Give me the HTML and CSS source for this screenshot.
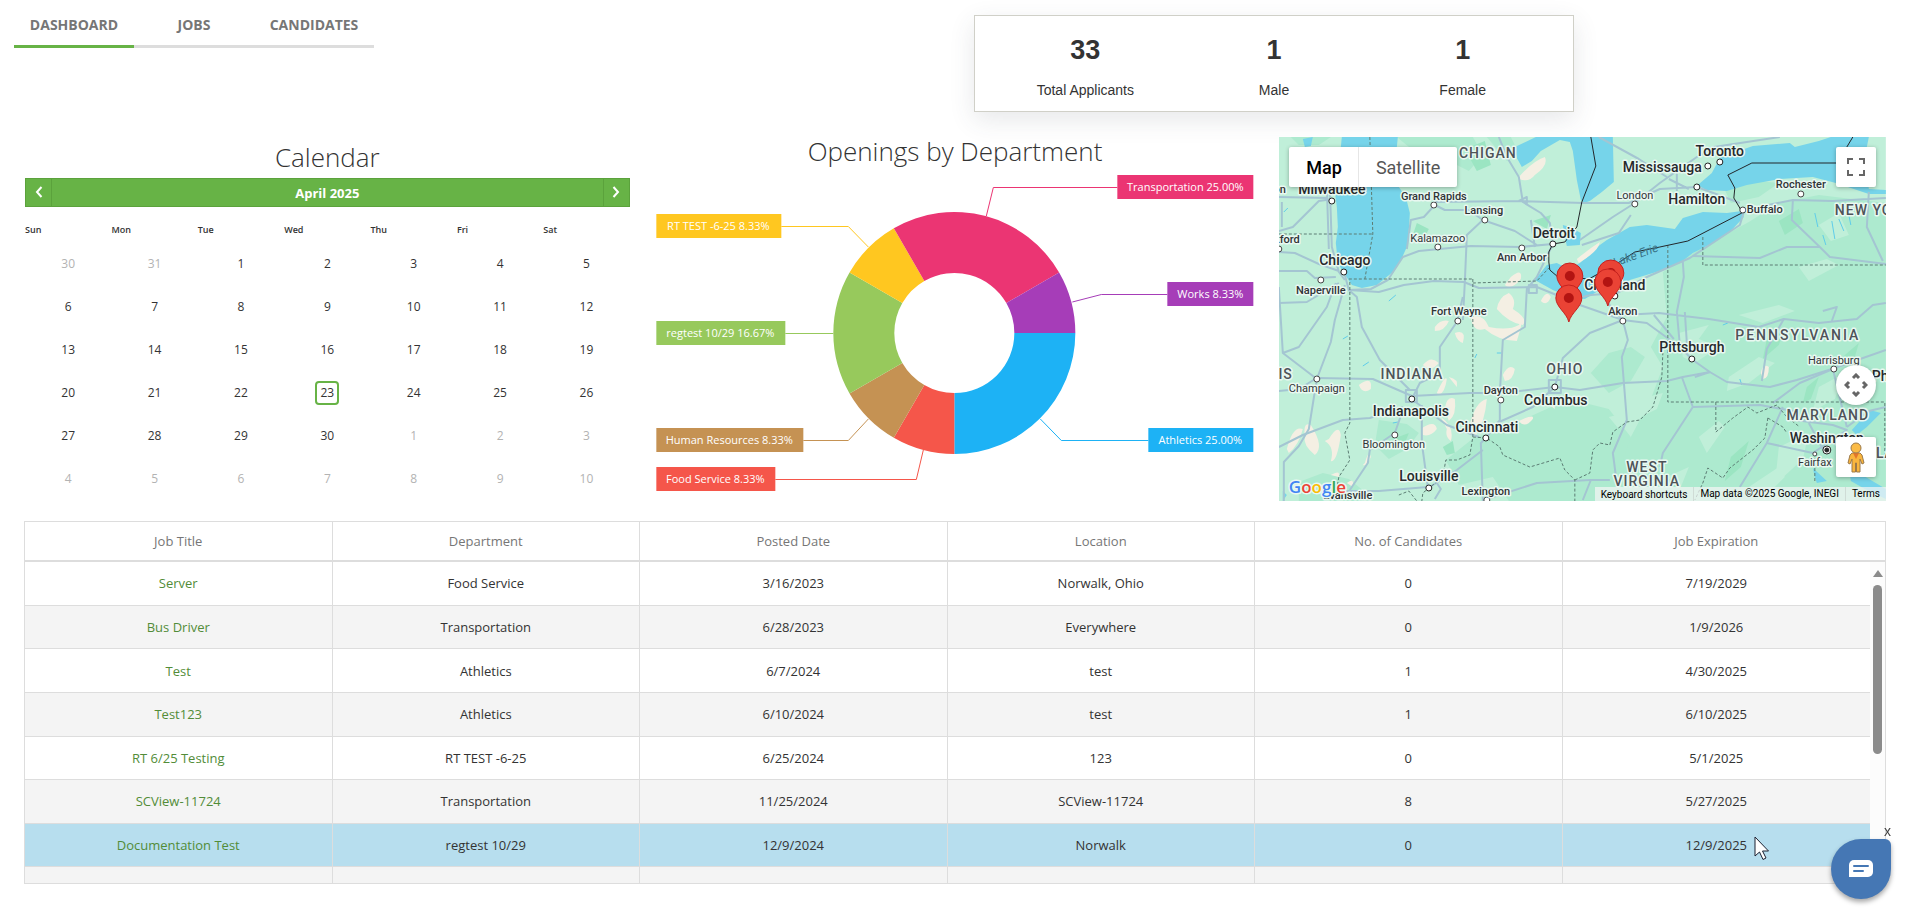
FILE: index.html
```html
<!DOCTYPE html>
<html lang="en">
<head>
  <meta charset="UTF-8" />
  <meta name="viewport" content="width=device-width, initial-scale=1.0" />
  <title>Dashboard</title>
  <link rel="stylesheet" href="styles.css">
</head>
<body>
  <header class="top">
    <nav class="tabs">
      <a href="#dashboard" class="tab active">DASHBOARD</a>
      <a href="#jobs" class="tab">JOBS</a>
      <a href="#candidates" class="tab">CANDIDATES</a>
    </nav>
    <div class="stats">
      <div class="stat"><strong>33</strong><span>Total Applicants</span></div>
      <div class="stat"><strong>1</strong><span>Male</span></div>
      <div class="stat"><strong>1</strong><span>Female</span></div>
    </div>
  </header>

  <main>
    <div class="panels">
      <!-- Calendar -->
      <section class="calendar">
        <h2>Calendar</h2>
        <div class="cal-nav">
          <button type="button" aria-label="Previous month">
            <svg width="8" height="12" viewBox="0 0 8 12"><path d="M6.500 1L2 6l4.500 5" /></svg>
          </button>
          <button type="button" class="cal-caption">April 2025</button>
          <button type="button" aria-label="Next month">
            <svg width="8" height="12" viewBox="0 0 8 12"><path d="M1.500 1L6 6l-4.500 5" /></svg>
          </button>
        </div>
        <table class="cal-days">
          <thead>
            <tr><th>Sun</th><th>Mon</th><th>Tue</th><th>Wed</th><th>Thu</th><th>Fri</th><th>Sat</th></tr>
          </thead>
          <tbody>
            <tr><td class="other">30</td><td class="other">31</td><td>1</td><td>2</td><td>3</td><td>4</td><td>5</td></tr>
            <tr><td>6</td><td>7</td><td>8</td><td>9</td><td>10</td><td>11</td><td>12</td></tr>
            <tr><td>13</td><td>14</td><td>15</td><td>16</td><td>17</td><td>18</td><td>19</td></tr>
            <tr><td>20</td><td>21</td><td>22</td><td><span class="today">23</span></td><td>24</td><td>25</td><td>26</td></tr>
            <tr><td>27</td><td>28</td><td>29</td><td>30</td><td class="other">1</td><td class="other">2</td><td class="other">3</td></tr>
            <tr><td class="other">4</td><td class="other">5</td><td class="other">6</td><td class="other">7</td><td class="other">8</td><td class="other">9</td><td class="other">10</td></tr>
          </tbody>
        </table>
      </section>

      <!-- Openings donut -->
      <section class="chart">
        <h2>Openings by Department</h2>
        <svg class="donut" viewBox="0 0 606 334">
          <!-- slices, centre 302,166, radii 121 and 60 -->
          <path fill="#1db2f5" d="M423 166A121 121 0 0 1 302 287V226A60 60 0 0 0 362 166Z" />
          <path fill="#f5564a" d="M302 287A121 121 0 0 1 241.500 270.800L272 218A60 60 0 0 0 302 226Z" />
          <path fill="#c59253" d="M241.500 270.800A121 121 0 0 1 197.200 226.500L250 196A60 60 0 0 0 272 218Z" />
          <path fill="#97c95c" d="M197.200 226.500A121 121 0 0 1 197.200 105.500L250 136A60 60 0 0 0 250 196Z" />
          <path fill="#ffc720" d="M197.200 105.500A121 121 0 0 1 241.500 61.200L272 114A60 60 0 0 0 250 136Z" />
          <path fill="#eb3573" d="M241.500 61.200A121 121 0 0 1 406.800 105.500L354 136A60 60 0 0 0 272 114Z" />
          <path fill="#a63db8" d="M406.800 105.500A121 121 0 0 1 423 166H362A60 60 0 0 0 354 136Z" />
          <g class="leads">
            <path stroke="#eb3573" d="M334 49L341 20.500H465" />
            <path stroke="#a63db8" d="M420 135L449 127.500H515" />
            <path stroke="#1db2f5" d="M388 252L409 273.500H496" />
            <path stroke="#ffc720" d="M216 80L196 59.500H129" />
            <path stroke="#97c95c" d="M181 166.500H133" />
            <path stroke="#c59253" d="M216 252L196 273.500H151" />
            <path stroke="#f5564a" d="M271 283L264 312.500H123" />
          </g>
          <g class="labels">
            <rect x="465" y="8" width="136" height="24" fill="#eb3573" />
            <rect x="515" y="115" width="86" height="24" fill="#a63db8" />
            <rect x="496" y="261" width="105" height="24" fill="#1db2f5" />
            <rect x="4" y="47" width="125" height="24" fill="#ffc720" />
            <rect x="4" y="154" width="129" height="24" fill="#97c95c" />
            <rect x="4" y="261" width="147" height="24" fill="#c59253" />
            <rect x="4" y="300" width="119" height="24" fill="#f5564a" />
            <text x="533" y="24">Transportation 25.00%</text>
            <text x="558" y="131">Works 8.33%</text>
            <text x="548" y="277">Athletics 25.00%</text>
            <text x="66" y="63">RT TEST -6-25 8.33%</text>
            <text x="68" y="170">regtest 10/29 16.67%</text>
            <text x="77" y="277">Human Resources 8.33%</text>
            <text x="63" y="316">Food Service 8.33%</text>
          </g>
        </svg>
      </section>

      <!-- Map -->
      <section class="map">
        <svg class="map-canvas" viewBox="0 0 607 364" preserveAspectRatio="xMidYMid slice">
          <rect width="607" height="364" fill="#c0efd9" />
          <!-- hills and woods -->
          <g fill="#adeacf">
            <path d="M384 135L424 110 470 85 500 66 540 58 607 66V364H312L330 330 352 300 372 262 384 230 372 210 388 180Z" />
            <path d="M167 323L196 300 226 294 250 280 290 262 330 272 352 300 330 364H230L214 340 180 348Z" />
            <path d="M100 283L128 287 140 296 128 312 110 322 96 308ZM20 345L44 336 70 342 90 358 84 364H20Z" />
            <path d="M118 0H194L204 18 190 34 170 24 140 18ZM12 0H52L40 8H20ZM208 0H232L240 16 228 24Z" />
            <path d="M312 236L330 216 352 210 366 220 352 244 330 256ZM440 40L500 46 480 60 452 66Z" />
          </g>
          <g fill="#c0efd9">
            <path d="M400 196L430 188 420 202 440 210 416 226 404 220ZM450 240L480 220 496 226 470 246 448 254Z" />
            <path d="M520 130L548 122 560 128 530 144ZM420 300L440 284 446 290 428 316ZM360 262L384 256 378 272 362 280Z" />
            <path d="M500 310L530 296 524 322 496 348ZM460 178L500 168 516 174 484 186ZM330 280L346 276 340 292ZM540 250L566 236 556 262 534 274Z" />
            <path d="M470 350L500 330 506 340 486 360ZM388 340L410 330 402 350ZM540 88L560 76 570 98 552 104Z" />
          </g>
          <g fill="#9be5c2">
            <path d="M138 86L150 92 144 104 134 98ZM186 12L206 4 212 28 198 34ZM500 84L520 72 524 86 506 98ZM488 202L506 192 500 208 484 222ZM566 218L580 206 576 220 560 226Z" />
            <path d="M164 310L174 304 176 316 168 318ZM114 302L130 296 126 306ZM528 250L540 240 532 262 524 266ZM254 84L272 78 268 92ZM452 320L470 304 462 330 446 344Z" />
          </g>
          <g fill="#f4efe3">
            <path d="M240 40Q254 24 266 20Q270 28 256 38Q250 46 240 42ZM218 172Q220 160 230 156Q238 162 234 172Q250 182 244 188Q230 186 218 172Z" />
            <path d="M232 140Q244 130 242 142Q232 154 226 148ZM156 190Q162 182 170 184Q166 194 156 194ZM176 196Q188 192 184 206Q178 204 176 196ZM192 180Q204 176 210 190Q230 194 240 188Q246 178 238 204Q220 204 206 192Q194 196 192 180Z" />
            <path d="M80 248Q94 238 92 252Q84 258 80 248ZM144 228Q152 218 160 226Q152 236 144 228ZM158 256Q166 238 168 242Q166 256 160 258ZM170 240Q180 242 178 250ZM166 272Q168 258 176 262Q178 278 170 284Z" />
            <path d="M224 238Q230 226 236 232Q234 244 226 244ZM190 292Q196 264 208 262Q206 286 196 300ZM142 292Q156 282 158 292Q152 300 144 298ZM162 280Q176 290 172 304Q166 300 168 292ZM240 284Q256 276 254 282Q246 292 240 284Z" />
            <path d="M8 312Q14 288 24 292Q20 308 10 316ZM26 300Q24 284 32 288Q46 310 36 318Q24 308 26 300ZM50 302Q60 286 62 298Q58 326 52 324Q56 310 46 304ZM86 326Q90 312 92 320Q88 330 84 328ZM52 338Q62 332 60 340ZM68 346Q76 340 74 350Z" />
            <path d="M482 236Q484 226 490 230Q490 242 484 242ZM262 164Q268 152 272 160Q268 170 262 164ZM268 266Q276 262 276 272Z" />
          </g>
          <!-- lakes and bays -->
          <g fill="#76d4ea">
            <path d="M63 0L60 30 56 55 58 70 59 90 57 106 59 126 65 136 73 148 83 151 98 148 114 135 123 121 128 110 130 93 131 76 127 60 120 50 116 30 119 0Z" />
            <path d="M257 0L236 10 238 21 243 30 253 24 262 14 281 3 291 5 294 14 298 43 302 63 305 66 311 64 323 55 335 45 334 0Z" />
            <path d="M284 88L291 90 302 96 301 108 288 109 286 100Z" />
            <path d="M256 143L268 128 278 126 290 132 301 126 311 118 321 108 328 103 351 90 368 88 396 92 404 81 424 75 448 76 463 74 465 80 451 95 434 106 414 116 401 126 384 133 361 140 351 143 338 150 321 153 306 162 291 160 274 153Z" />
            <path d="M419 48L433 36 441 21 454 16 474 9 511 6 516 10 540 4 552 0H590L586 20 590 52 607 53V57H590L557 46 534 40 501 42 468 48 448 54 427 53Z" />
            <path d="M591 273L602 276 588 290 578 298 573 293ZM534 331L548 344 538 346 536 340ZM570 330L607 352V362L586 352 572 344ZM24 2L34 0 32 9 26 10ZM4 354L8 358 4 364Z" />
          </g>
          <path fill="#f4efe3" d="M298 122Q310 112 321 105Q320 114 300 126Z" />
          <g class="streams">
            <path d="M5 75l4-4M62 28l5-2M110 164l7-6M84 229l6-4M196 221l2-4M218 216h5M64 202l5-3M114 286l5-1M536 76l3 14M553 84l3 18M560 82l5 12M570 78l2 10M544 98l3 10M461 242l2 6M444 188l5-2" />
          </g>
          <!-- highways -->
          <g class="roads">
            <path d="M0 60L48 61M51 50L53 110 60 135 66 143M48 50L50 112M0 94L14 90 40 64 54 62M3 65V90M0 115L16 116 40 127 60 134M0 134L28 134 36 141 57 140M0 166L28 165 60 146" />
            <path d="M66 148L56 183 52 205 38 242 30 292 20 309 5 325V364M0 150L4 216 38 242M0 254L20 252 38 241M4 216L20 210 48 170 57 146" />
            <path d="M66 138L70 153 92 152 109 143 124 120 140 114 192 109 241 110 274 107M70 153L100 155 125 148 155 144 185 145 200 151 258 150 290 163 312 158 338 156 368 140 411 121 461 88 465 75" />
            <path d="M128 112L132 83 145 80 156 68 166 73 190 73 204 83 236 94 258 108M204 83L188 98 186 145 184 183M220 0L228 20 240 40 244 65 262 76 271 86 274 107M156 65L241 64 305 66M240 64l8-4v8M252 83L256 110" />
            <path d="M274 107L258 140 248 152 246 190 224 203 221 256 221 283 208 300 202 306 204 364M250 148h8v8h-8zM38 241L94 242 133 259 191 256 224 256 276 250 301 253 344 246 388 244 404 240 431 235 448 245 491 250 518 243 553 232 607 213" />
            <path d="M131 253L101 223 83 190 78 160 70 153M127 253h11v12h-11zM133 262L141 246 161 236 161 210 178 185 184 160M143 268L143 306 149 350M134 263L168 288 200 300M124 270L91 281 64 283 24 298 0 310M124 273L116 296 91 313 89 326 71 353" />
            <path d="M151 350L178 333 204 313M149 350L100 354 60 354M158 346l4 6-6 10M211 361L258 346 311 343 331 343M270 243h12v13h-12zM276 250L284 221 311 196 344 183 328 165M276 250L254 270 218 286" />
            <path d="M344 183L349 203 343 220 348 283 334 316 338 346M344 183L368 186 401 210 414 223 431 235M344 178L380 176 430 182 480 190 505 182 540 186 578 182 594 168 607 166M401 208L398 175 405 140 404 125M375 178L395 202M408 206L406 175" />
            <path d="M465 73L514 63 554 64 607 61M514 64L513 83 541 110 551 120 607 127M414 119L481 121 508 110 541 110M590 55L588 90 604 124M505 182L488 212 483 244M553 184L558 170 544 174" />
            <path d="M301 103L334 80 356 66 381 46 418 20 435 10 501 0M301 66L350 66 381 52 418 50 440 58 461 66M303 108L340 96 352 78M390 42l20 10M398 34v20M320 0L360 22 388 40" />
            <path d="M403 240L414 270 401 290 384 316 381 330M414 270L481 268 520 275M504 270L488 306 461 350M488 306L534 316M516 283L554 288 568 293 534 316M494 266L521 246 554 232 568 290M530 286l14 26M568 290L590 274 607 270M301 168L344 183M431 235L416 240M312 343l-8 20" />
          </g>
          <!-- state lines -->
          <g class="state-lines">
            <path d="M71 145V286L66 296 71 323 60 340 56 363M70 142H194M194 146L258 144 270 131M194 142V300L191 318 178 323 167 323 164 340 144 356 143 364M0 97H94M91 0L94 97 86 142" />
            <path d="M194 300L208 301 221 310 224 318 251 330 281 321 286 333 296 343V364M296 343L311 336 314 313 321 306 331 308 334 295 348 285 361 283 374 270 383 240 384 216M389 108V265H607M424 100V128H607" />
            <path d="M437 265V295L454 281 469 270 478 276 498 268 508 280 521 290M489 281L486 301 474 313 451 331 444 341 429 331 424 346 416 363M489 281L504 290 508 296M606 266V320M536 316V344M120 358l10-4 8 10" />
          </g>
          <path class="border" d="M574 0L568 10 558 26H473L449 38 456 51 455 61 461 71 463 76 409 104 381 110 356 115 339 126 310 142 278 139 271 133 270 125V115L274 107 286 105 298 90 303 65 317 29 312 0" />
          <g class="dots">
            <circle cx="53" cy="64" r="3" /><circle cx="65" cy="135" r="3" /><circle cx="274" cy="107" r="3" />
            <circle cx="441" cy="25" r="3" /><circle cx="429" cy="29" r="3" /><circle cx="418" cy="50" r="3" />
            <circle cx="336" cy="159" r="3" /><circle cx="413" cy="222" r="3" /><circle cx="276" cy="250" r="3" />
            <circle cx="207" cy="301" r="3" /><circle cx="133" cy="262" r="3" /><circle cx="150" cy="351" r="3" />
            <circle cx="548" cy="313" r="4" /><circle class="capital" cx="548" cy="313" r="2" />
          </g>
          <g class="dots small">
            <circle cx="42" cy="143" r="3" /><circle cx="155" cy="68" r="3" /><circle cx="206" cy="83" r="3" />
            <circle cx="159" cy="110" r="3" /><circle cx="243" cy="111" r="3" /><circle cx="179" cy="184" r="3" />
            <circle cx="0" cy="112" r="3" /><circle cx="356" cy="67" r="3" /><circle cx="522" cy="57" r="3" />
            <circle cx="464" cy="73" r="3" /><circle cx="344" cy="184" r="3" /><circle cx="555" cy="232" r="3" />
            <circle cx="536" cy="317" r="2" /><circle cx="222" cy="263" r="3" /><circle cx="116" cy="298" r="3" />
            <circle cx="208" cy="363" r="3" /><circle cx="38" cy="242" r="3" />
          </g>
          <g class="state">
            <text x="209" y="21">CHIGAN</text>
            <text x="133" y="242">INDIANA</text>
            <text x="286" y="237">OHIO</text>
            <text class="wide" x="519" y="203">PENNSYLVANIA</text>
            <text x="549" y="283">MARYLAND</text>
            <text x="368" y="335">WEST</text>
            <text x="368" y="349">VIRGINIA</text>
            <text class="from" x="556" y="78">NEW YORK</text>
            <text class="from" x="578" y="321">DELAWARE</text>
            <text class="to" x="14" y="242">ILLINOIS</text>
          </g>
          <g class="city">
            <text x="53" y="57">Milwaukee</text>
            <text x="66" y="128">Chicago</text>
            <text x="275" y="101">Detroit</text>
            <text x="441" y="19">Toronto</text>
            <text class="to" x="423" y="35">Mississauga</text>
            <text x="418" y="67">Hamilton</text>
            <text x="336" y="153">Cleveland</text>
            <text x="413" y="215">Pittsburgh</text>
            <text x="277" y="268">Columbus</text>
            <text x="208" y="295">Cincinnati</text>
            <text x="132" y="279">Indianapolis</text>
            <text x="150" y="344">Louisville</text>
            <text x="548" y="306">Washington</text>
            <text class="from" x="593" y="244">Philadelphia</text>
          </g>
          <g class="town">
            <text class="to" x="7" y="56">Madison</text>
            <text class="to" x="21" y="106">Rockford</text>
            <text x="42" y="157">Naperville</text>
            <text x="155" y="63">Grand Rapids</text>
            <text x="205" y="77">Lansing</text>
            <text class="thin" x="159" y="105">Kalamazoo</text>
            <text x="243" y="124">Ann Arbor</text>
            <text x="180" y="178">Fort Wayne</text>
            <text class="thin" x="356" y="62">London</text>
            <text x="522" y="51">Rochester</text>
            <text class="from" x="468" y="76">Buffalo</text>
            <text x="344" y="178">Akron</text>
            <text class="thin" x="555" y="227">Harrisburg</text>
            <text class="thin" x="536" y="329">Fairfax</text>
            <text x="222" y="257">Dayton</text>
            <text class="thin" x="115" y="311">Bloomington</text>
            <text x="207" y="358">Lexington</text>
            <text class="thin" x="38" y="255">Champaign</text>
            <text x="69" y="362">Evansville</text>
          </g>
          <text class="lake from" x="336" y="130" transform="rotate(-20 336 130)">Lake Erie</text>
          <defs>
            <g id="pin">
              <path d="M0 24C-2 15-13 9-13 0A13 13 0 0 1 13 0C13 9 2 15 0 24Z" fill="#ea4335" stroke="#c5221f" />
              <circle r="5" fill="#b31412" />
            </g>
          </defs>
          <use href="#pin" x="291" y="139" />
          <use href="#pin" x="290" y="161" />
          <use href="#pin" x="332" y="136" />
          <use href="#pin" x="329" y="145" />
          <text class="brand" x="10" y="356"><tspan fill="#4285f4">G</tspan><tspan fill="#ea4335">o</tspan><tspan fill="#fbbc04">o</tspan><tspan fill="#4285f4">g</tspan><tspan fill="#34a853">l</tspan><tspan fill="#ea4335">e</tspan></text>
        </svg>

        <div class="map-type">
          <button type="button" class="on">Map</button>
          <button type="button">Satellite</button>
        </div>
        <div class="map-tools">
          <button type="button" aria-label="Toggle fullscreen view">
            <svg width="18" height="18" viewBox="0 0 18 18"><path fill="#666" d="M0 0v6h2V2h4V0H0zm16 0h-4v2h4v4h2V0h-2zm0 16h-4v2h6v-6h-2v4zM2 12H0v6h6v-2H2v-4z" /></svg>
          </button>
          <button type="button" class="camera" aria-label="Map camera controls">
            <svg width="24" height="24" viewBox="0 0 24 24"><path fill="none" stroke="#666" stroke-width="3" d="M9 5l3-3 3 3M9 19l3 3 3-3M5 9l-3 3 3 3M19 9l3 3-3 3" /></svg>
          </button>
          <button type="button" aria-label="Drag Pegman onto the map to open Street View">
            <svg width="18" height="31" viewBox="0 0 18 31">
              <path fill="#f9b53d" stroke="#9c7a4a" d="M5 11h8l2 2 2 8-2 1-2-5v13H9.500V21h-1v9H5V17l-2 5-2-1 2-8z" />
              <path fill="#e2762b" d="M6 11h6l-3 6z" />
              <circle cx="9" cy="6" r="5" fill="#fbbb46" stroke="#9c7a4a" />
            </svg>
          </button>
        </div>
        <div class="map-legal">
          <button type="button">Keyboard shortcuts</button>
          <span>Map data ©2025 Google, INEGI</span>
          <a href="#terms">Terms</a>
        </div>
      </section>
    </div>

    <!-- Jobs grid -->
    <div class="grid">
      <table class="jobs">
        <thead>
          <tr><th>Job Title</th><th>Department</th><th>Posted Date</th><th>Location</th><th>No. of Candidates</th><th>Job Expiration</th></tr>
        </thead>
        <tbody>
          <tr><td><a href="#job">Server</a></td><td>Food Service</td><td>3/16/2023</td><td>Norwalk, Ohio</td><td>0</td><td>7/19/2029</td></tr>
          <tr><td><a href="#job">Bus Driver</a></td><td>Transportation</td><td>6/28/2023</td><td>Everywhere</td><td>0</td><td>1/9/2026</td></tr>
          <tr><td><a href="#job">Test</a></td><td>Athletics</td><td>6/7/2024</td><td>test</td><td>1</td><td>4/30/2025</td></tr>
          <tr><td><a href="#job">Test123</a></td><td>Athletics</td><td>6/10/2024</td><td>test</td><td>1</td><td>6/10/2025</td></tr>
          <tr><td><a href="#job">RT 6/25 Testing</a></td><td>RT TEST -6-25</td><td>6/25/2024</td><td>123</td><td>0</td><td>5/1/2025</td></tr>
          <tr><td><a href="#job">SCView-11724</a></td><td>Transportation</td><td>11/25/2024</td><td>SCView-11724</td><td>8</td><td>5/27/2025</td></tr>
          <tr class="hover"><td><a href="#job">Documentation Test</a></td><td>regtest 10/29</td><td>12/9/2024</td><td>Norwalk</td><td>0</td><td>12/9/2025</td></tr>
          <tr><td>&nbsp;</td><td></td><td></td><td></td><td></td><td></td></tr>
        </tbody>
      </table>
      <div class="scroll">
        <div class="scroll-head"></div>
        <div class="scroll-up"></div>
        <div class="scroll-thumb"></div>
      </div>
      <svg class="pointer" width="16" height="25" viewBox="0 0 16 25"><path fill="#fff" stroke="#1c2030" d="M1 1v19l4.500-4 3.500 7.500 3-1.500-3.500-7H14.500z" /></svg>
    </div>
  </main>

  <!-- Chat launcher -->
  <div class="chat">
    <button type="button" class="chat-close" aria-label="Close chat">x</button>
    <button type="button" class="chat-open" aria-label="Open chat">
      <svg width="24" height="18" viewBox="0 0 24 18">
        <path fill="#fff" d="M5 0h14a5 5 0 0 1 5 5v7a5 5 0 0 1-5 5H0V5a5 5 0 0 1 5-5z" />
        <path stroke="#4577b4" stroke-width="2" stroke-linecap="round" d="M5 6h14M5 11h9" />
      </svg>
    </button>
  </div>
</body>
</html>
```
FILE: styles.css
```css
* {
  box-sizing: border-box;
  margin: 0;
  padding: 0;
}
body {
  font-family: 'Segoe UI', 'Open Sans', sans-serif;
  font-size: 13px;
  color: #333;
  background: #fff;
}
button {
  border: none;
  background: none;
  font-family: inherit;
  cursor: pointer;
}
a {
  text-decoration: none;
}
h2 {
  font-size: 26px;
  font-weight: 300;
  text-align: center;
}

/* Header */
.top {
  display: grid;
  grid-template-columns: 1fr 1fr;
  align-items: start;
}
.tabs {
  display: flex;
  margin-left: 14px;
}
.tab {
  width: 120px;
  height: 48px;
  line-height: 50px;
  text-align: center;
  font-size: 14px;
  font-weight: 700;
  color: #767676;
  border-bottom: 3px solid #ddd;
}
.tab.active {
  border-color: #67b346;
}
.stats {
  display: flex;
  width: 600px;
  height: 97px;
  margin: 15px 0 25px 20px;
  padding: 16px;
  border: 1px solid #d0d0c8;
  background: #fff;
  box-shadow: 0 8px 24px rgba(60, 64, 80, 0.12);
  font-family: 'Liberation Sans', Arial, sans-serif;
}
.stat {
  flex: 1;
  display: flex;
  flex-direction: column;
  align-items: center;
}
.stat strong {
  font-size: 27px;
  line-height: 36px;
}
.stat span {
  font-size: 14px;
  line-height: 18px;
  margin-top: 13px;
}

main {
  padding: 0 22px 0 24px;
}
.panels {
  display: grid;
  grid-template-columns: 1fr 1fr 1fr;
  gap: 21px;
  height: 364px;
}

/* Calendar */
.calendar {
  padding: 0 1px;
}
.calendar h2 {
  line-height: 41px;
}
.cal-nav {
  display: flex;
  height: 29px;
  border: 1px solid #5ba23c;
  background: #67b346;
}
.cal-nav button {
  width: 25px;
  color: #fff;
}
.cal-nav .cal-caption {
  flex: 1;
  border: 1px solid #5ba23c;
  border-width: 0 1px;
  font-size: 13px;
  font-weight: 700;
}
.cal-nav path {
  fill: none;
  stroke: #fff;
  stroke-width: 2;
}
.cal-days {
  width: 100%;
  table-layout: fixed;
  border-collapse: collapse;
}
.cal-days th {
  height: 35px;
  padding-top: 9px;
  text-align: left;
  font-size: 9px;
  font-weight: 600;
}
.cal-days td {
  height: 43px;
  text-align: center;
  font-size: 12px;
}
.cal-days .other {
  color: #b3b3b3;
}
.today {
  display: inline-block;
  width: 24px;
  height: 24px;
  line-height: 20px;
  border: 2px solid #67b346;
  border-radius: 4px;
}

/* Donut */
.chart h2 {
  height: 30px;
  line-height: 28px;
}
.donut {
  display: block;
  width: 100%;
  height: 334px;
}
.leads {
  fill: none;
}
.labels text {
  fill: #fff;
  font-size: 11px;
  text-anchor: middle;
}

/* Map */
.map {
  position: relative;
  overflow: hidden;
  font-family: Roboto, sans-serif;
}
.map-canvas {
  display: block;
  width: 100%;
  height: 100%;
}
.map-canvas text {
  text-anchor: middle;
  paint-order: stroke;
  stroke: #e9f8f1;
  stroke-width: 3px;
  stroke-linejoin: round;
}
.map-canvas .from {
  text-anchor: start;
}
.map-canvas .to {
  text-anchor: end;
}
.roads {
  fill: none;
  stroke: #a4c5d2;
  stroke-width: 2;
  stroke-linejoin: round;
}
.streams {
  stroke: #5fcdea;
}
.state-lines {
  fill: none;
  stroke: #5c7d74;
  stroke-dasharray: 3 2;
}
.border {
  fill: none;
  stroke: #23272b;
  stroke-width: 1;
}
.dots {
  fill: #fff;
  stroke: #222;
  stroke-width: 1;
}
.dots.small {
  stroke: #444;
}
.dots .capital {
  fill: #222;
}
.state {
  fill: #4e5358;
  font-size: 14px;
  font-weight: 500;
  letter-spacing: 1px;
}
.state .wide {
  letter-spacing: 2px;
}
.city {
  fill: #26292c;
  font-size: 14px;
  font-weight: 500;
}
.town {
  fill: #303437;
  font-size: 11px;
  font-weight: 500;
}
.town .thin {
  font-weight: 400;
}
.map-canvas .lake {
  fill: #3a7488;
  stroke: none;
  font-size: 12px;
  font-style: italic;
}
.map-canvas .brand {
  font-family: 'Open Sans', sans-serif;
  font-size: 17px;
  font-weight: 600;
  text-anchor: start;
}
.map-type {
  position: absolute;
  top: 10px;
  left: 10px;
  display: flex;
  background: #fff;
  border-radius: 2px;
  box-shadow: 0 1px 4px rgba(0, 0, 0, 0.3);
}
.map-type button {
  height: 40px;
  padding: 0 17px;
  font-size: 18px;
  color: #565656;
}
.map-type .on {
  padding-right: 16px;
  color: #000;
  font-weight: 500;
  border-right: 1px solid #e6e6e6;
}
.map-tools {
  position: absolute;
  top: 10px;
  right: 10px;
  bottom: 24px;
  display: flex;
  flex-direction: column;
  gap: 32px;
}
.map-tools button {
  display: flex;
  align-items: center;
  justify-content: center;
  width: 40px;
  height: 40px;
  background: #fff;
  border-radius: 2px;
  box-shadow: 0 1px 4px rgba(0, 0, 0, 0.3);
}
.map-tools .camera {
  margin-top: auto;
  border-radius: 50%;
}
.map-legal {
  position: absolute;
  right: 0;
  bottom: 0;
  display: flex;
  height: 14px;
  font-size: 10px;
  line-height: 14px;
  background: rgba(245, 245, 245, 0.7);
}
.map-legal * {
  padding: 0 6px;
  font-size: 10px;
  color: #000;
}
.map-legal span {
  border: 1px solid #cfdcd6;
  border-width: 0 1px;
}

/* Jobs grid */
.grid {
  position: relative;
  display: flex;
  align-items: flex-start;
  height: 363px;
  margin-top: 20px;
  overflow: hidden;
  border: 1px solid #ddd;
}
.jobs {
  flex: 1;
  width: 100%;
  height: 389px;
  table-layout: fixed;
  border-spacing: 0;
}
.jobs th {
  height: 40px;
  font-weight: 400;
  color: #767676;
  border-bottom: 2px solid #ddd;
  border-right: 1px solid #ddd;
}
.jobs td {
  text-align: center;
  border-bottom: 1px solid #ddd;
  border-right: 1px solid #ddd;
}
.jobs th:last-child,
.jobs td:last-child {
  border-right: none;
}
.jobs tbody tr:nth-child(even) {
  background: #f4f4f4;
}
.jobs tbody tr.hover {
  background: #b7deee;
}
.jobs a {
  color: #528c38;
}
.scroll {
  display: flex;
  flex-direction: column;
  flex-shrink: 0;
  align-items: center;
  width: 15px;
  height: 100%;
  background: #fcfcfc;
}
.scroll-head {
  width: 100%;
  height: 40px;
  background: #fff;
  border-bottom: 2px solid #ddd;
}
.scroll-up {
  margin: 8px 0;
  border: 5px solid transparent;
  border-top: none;
  border-bottom: 7px solid #8b8b8b;
}
.scroll-thumb {
  width: 9px;
  height: 169px;
  border-radius: 5px;
  background: #8b8b8b;
}
.pointer {
  position: absolute;
  right: 115px;
  bottom: 22px;
}

/* Chat launcher */
.chat {
  position: fixed;
  right: 17px;
  bottom: 18px;
  display: flex;
  flex-direction: column;
  align-items: flex-end;
}
.chat-close {
  font-family: 'Liberation Sans', Arial, sans-serif;
  font-size: 14px;
  line-height: 16px;
  color: #444;
}
.chat-open {
  display: flex;
  align-items: center;
  justify-content: center;
  width: 60px;
  height: 60px;
  border-radius: 50% 6px 50% 50%;
  background: #4577b4;
  box-shadow: 0 3px 5px rgba(0, 0, 0, 0.35);
}
```
